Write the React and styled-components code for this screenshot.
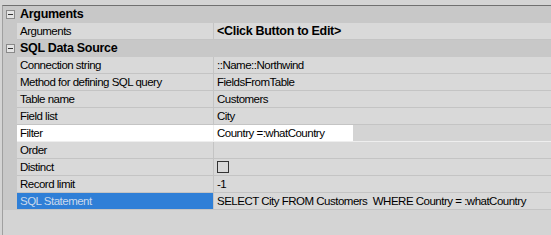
import React from "react";
import styled, { createGlobalStyle, css } from "styled-components";

const Global = createGlobalStyle`
  html, body { margin: 0; padding: 0; }
  body { background: #d4d4d4; font-family: "Liberation Sans", Arial, sans-serif; }
`;

const Page = styled.div`
  width: 551px;
  height: 235px;
  box-sizing: border-box;
  padding: 5px 0 0 2px;
  background: #d4d4d4;
  overflow: hidden;
`;

const Panel = styled.div`
  border-top: 1px solid #707070;
  border-left: 1px solid #a0a0a0;
  height: 100%;
  box-sizing: border-box;
`;

const Row = styled.div`
  position: relative;
  display: grid;
  grid-template-columns: 14px 196px 1fr;
  height: 17px;
  font-size: 11.5px;
  color: #000;
  ${(p) =>
    p.$highlight &&
    css`
      &::before {
        content: "";
        position: absolute;
        left: 11px;
        width: 339px;
        top: -3px;
        bottom: -4px;
        background: #ffffff;
        z-index: 0;
      }
    `}
`;

const Margin = styled.div`
  background: #c8c8c8;
  position: relative;
  z-index: 1;
  display: flex;
  align-items: center;
  justify-content: center;
`;

const Cell = styled.div`
  position: relative;
  z-index: 1;
  box-sizing: border-box;
  border-bottom: 1px solid ${(p) => (p.$light ? "#eeeeee" : "#c4c4c4")};
  background: ${(p) => (p.$selected ? "#2f7fd7" : p.$light ? "transparent" : "#d9d9d9")};
  color: ${(p) => (p.$selected ? "#c9d9ec" : "#000")};
  padding-left: 3px;
  line-height: 17px;
  white-space: nowrap;
  overflow: hidden;
  letter-spacing: ${(p) => (p.$bold ? "-0.3px" : "-0.5px")};
  font-size: ${(p) => (p.$bold ? "12.5px" : "11.5px")};
  font-weight: ${(p) => (p.$bold ? 700 : 400)};
  ${(p) =>
    p.$value &&
    css`
      border-left: 1px solid ${p.$light ? "#eeeeee" : "#c4c4c4"};
      padding-left: 3px;
    `}
`;

const CategoryRow = styled.div`
  display: grid;
  grid-template-columns: 14px 1fr;
  height: 17px;
  background: #c8c8c8;
`;

const CategoryTitle = styled.div`
  font-weight: 700;
  font-size: 12.5px;
  line-height: 17px;
  padding-left: 3px;
  letter-spacing: -0.3px;
`;

const Toggle = styled.div`
  width: 7px;
  height: 7px;
  border: 1px solid #8a8a8a;
  background: #e4e4e4;
  position: relative;
  &::after {
    content: "";
    position: absolute;
    left: 1px;
    right: 1px;
    top: 3px;
    height: 1px;
    background: #333;
  }
`;

const Check = styled.span`
  display: inline-block;
  width: 10px;
  height: 10px;
  border: 1px solid #333;
  vertical-align: middle;
  margin-top: -1px;
`;

const Category = ({ title }) => (
  <CategoryRow>
    <Margin>
      <Toggle />
    </Margin>
    <CategoryTitle>{title}</CategoryTitle>
  </CategoryRow>
);

const Prop = ({ label, value, bold, highlight, selected }) => (
  <Row $highlight={highlight}>
    <Margin />
    <Cell $light={highlight} $selected={selected}>{label}</Cell>
    <Cell $value $light={highlight} $bold={bold}>{value}</Cell>
  </Row>
);

export default function App() {
  return (
    <>
      <Global />
      <Page>
        <Panel>
          <Category title="Arguments" />
          <Prop label="Arguments" value="<Click Button to Edit>" bold />
          <Category title="SQL Data Source" />
          <Prop label="Connection string" value="::Name::Northwind" />
          <Prop label="Method for defining SQL query" value="FieldsFromTable" />
          <Prop label="Table name" value="Customers" />
          <Prop label="Field list" value="City" />
          <Prop label="Filter" value="Country =:whatCountry" highlight />
          <Prop label="Order" value="" />
          <Prop label="Distinct" value={<Check />} />
          <Prop label="Record limit" value="-1" />
          <Prop
            label="SQL Statement"
            value={"SELECT City FROM Customers \u00a0WHERE Country = :whatCountry"}
            selected
          />
        </Panel>
      </Page>
    </>
  );
}
